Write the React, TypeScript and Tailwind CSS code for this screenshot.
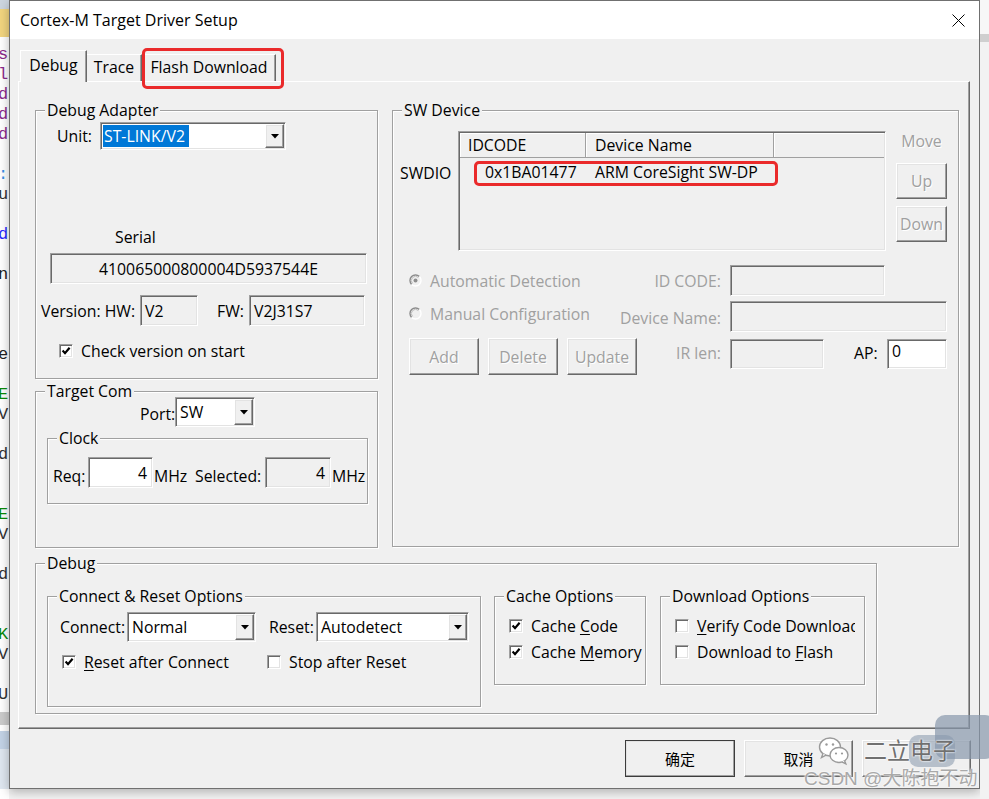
import React from "react";

type P = { className?: string; children?: React.ReactNode };

// Classic Win32 3D edges
const sunken =
  "border border-t-[#a0a0a0] border-l-[#a0a0a0] border-b-white border-r-white shadow-[inset_1px_1px_0_#696969,inset_-1px_-1px_0_#e3e3e3]";
const raised =
  "border border-t-white border-l-white border-b-[#696969] border-r-[#696969] shadow-[inset_-1px_-1px_0_#a0a0a0,inset_1px_1px_0_#e3e3e3]";
const etched = "border border-[#a0a0a0] shadow-[1px_1px_0_#ffffff,inset_1px_1px_0_#ffffff]";
const grey = "text-[#a0a0a0]";

function Group({ title, className = "", children }: P & { title: string }) {
  return (
    <div className={`relative shrink-0 ${etched} ${className}`}>
      <span className="absolute left-[9px] top-[-11px] bg-[#f0f0f0] px-[2px] leading-[20px] whitespace-nowrap">
        {title}
      </span>
      {children}
    </div>
  );
}

function Field({ className = "", children }: P) {
  return <div className={`flex shrink-0 items-center whitespace-nowrap ${sunken} ${className}`}>{children}</div>;
}

function Arrow() {
  return (
    <svg width="8" height="5" viewBox="0 0 8 5">
      <path d="M0 0h8L4 4.5z" fill="#000" />
    </svg>
  );
}

function Combo({ className = "", value, selected = false }: { className?: string; value: string; selected?: boolean }) {
  return (
    <div className={`flex shrink-0 bg-white p-[1px] ${sunken} ${className}`}>
      <div className="flex flex-1 items-center">
        {selected ? (
          <span className="ml-[1px] h-[22px] w-[86px] bg-[#0078d7] pl-[1px] leading-[22px] text-white">{value}</span>
        ) : (
          <span className="pl-[3px]">{value}</span>
        )}
      </div>
      <div className={`flex w-[19px] items-center justify-center bg-[#f0f0f0] ${raised}`}>
        <Arrow />
      </div>
    </div>
  );
}

function Btn({ className = "", children, disabled = false }: P & { disabled?: boolean }) {
  return (
    <div
      className={`flex shrink-0 items-center justify-center ${raised} ${
        disabled ? "text-[#a0a0a0] [text-shadow:1px_1px_0_#ffffff]" : ""
      } ${className}`}
    >
      {children}
    </div>
  );
}

function Check({ checked = false }: { checked?: boolean }) {
  return (
    <span className={`flex h-[14px] w-[14px] shrink-0 items-center justify-center bg-white ${sunken}`}>
      {checked && (
        <svg width="10" height="10" viewBox="0 0 10 10">
          <path d="M1.6 4.6l2.4 2.6L8.6 1.8" fill="none" stroke="#000" strokeWidth="2.2" />
        </svg>
      )}
    </span>
  );
}

function Radio({ on = false }: { on?: boolean }) {
  return (
    <svg width="13" height="13" viewBox="0 0 13 13" className="shrink-0">
      <circle cx="6.5" cy="6.5" r="5.5" fill="#f0f0f0" />
      <path d="M10.4 2.6A5.5 5.5 0 0 0 2.6 10.4" fill="none" stroke="#8a8a8a" strokeWidth="1.4" />
      <path d="M2.6 10.4A5.5 5.5 0 0 0 10.4 2.6" fill="none" stroke="#ffffff" strokeWidth="1.4" />
      <path d="M9.4 3.6A4.1 4.1 0 0 0 3.6 9.4" fill="none" stroke="#bdbdbd" strokeWidth="1" />
      {on && <circle cx="6.5" cy="6.5" r="2" fill="#8f8f8f" />}
    </svg>
  );
}

function Key({ children }: P) {
  return <span className="underline underline-offset-[2px]">{children}</span>;
}

const edgeLines: { ch: string; cls: string }[] = [
  { ch: "s", cls: "text-[#8b2b8b]" },
  { ch: "l", cls: "text-[#8b2b8b]" },
  { ch: "d", cls: "text-[#8b2b8b]" },
  { ch: "d", cls: "text-[#8b2b8b]" },
  { ch: "d", cls: "text-[#8b2b8b]" },
  { ch: "", cls: "" },
  { ch: ":", cls: "text-[#3a8ee6]" },
  { ch: "u", cls: "text-[#333333]" },
  { ch: "", cls: "" },
  { ch: "d", cls: "text-[#2a2aff]" },
  { ch: "", cls: "" },
  { ch: "n", cls: "text-[#222222]" },
  { ch: "", cls: "" },
  { ch: "", cls: "" },
  { ch: "", cls: "" },
  { ch: "e", cls: "text-[#222222]" },
  { ch: "", cls: "" },
  { ch: "E", cls: "text-[#0a8a0a]" },
  { ch: "V", cls: "text-[#333333]" },
  { ch: "", cls: "" },
  { ch: "d", cls: "text-[#333333]" },
  { ch: "", cls: "" },
  { ch: "", cls: "" },
  { ch: "E", cls: "text-[#0a8a0a]" },
  { ch: "V", cls: "text-[#333333]" },
  { ch: "", cls: "" },
  { ch: "d", cls: "text-[#333333]" },
  { ch: "", cls: "" },
  { ch: "", cls: "" },
  { ch: "K", cls: "text-[#0a8a0a]" },
  { ch: "V", cls: "text-[#333333]" },
  { ch: "", cls: "" },
  { ch: "U", cls: "text-[#333333]" },
];

// Sliver of the code editor visible behind the dialog
function EditorEdge() {
  return (
    <div className="flex h-[799px] w-[9px] shrink-0 flex-col overflow-hidden bg-white font-['Liberation_Mono',monospace] text-[17px] leading-[20px]">
      <div className="h-[9px] shrink-0 bg-[#cdd6df]" />
      <div className="h-[28px] shrink-0 bg-[#f2d57f]" />
      <div className="h-[8px] shrink-0" />
      {edgeLines.map((l, i) => (
        <div key={i} className={`-ml-[2px] h-[20px] shrink-0 ${l.cls}`}>
          {l.ch}
        </div>
      ))}
      <div className="h-[7px] shrink-0" />
      <div className="h-[13px] shrink-0 bg-[#cbcbcb]" />
      <div className="h-[6px] shrink-0" />
      <div className="h-[18px] shrink-0 bg-[#c3d3e6]" />
      <div className="h-[40px] shrink-0 bg-[#dfe7f0]" />
    </div>
  );
}

function RightEdge() {
  return (
    <div className="flex h-[799px] w-[9px] shrink-0 flex-col bg-[#f2f2f2]">
      <div className="h-[34px] shrink-0 bg-[#f7f7f7]" />
      <div className="h-[8px] shrink-0 bg-[#cfcfcf]" />
    </div>
  );
}

function Tabs() {
  return (
    <div className="relative flex h-[31px] items-end pl-[2px]">
      <div className="relative z-10 -mb-[1px] flex h-[32px] w-[67px] items-center justify-center border-l border-r border-t border-white border-r-[#696969] bg-[#f0f0f0] pb-[3px] shadow-[inset_-1px_0_0_#a0a0a0]">
        Debug
      </div>
      <div className="flex h-[27px] w-[55px] items-center justify-center border-r border-t border-white border-r-[#696969] pb-[2px] shadow-[inset_-1px_0_0_#a0a0a0]">
        Trace
      </div>
      <div className="flex h-[27px] w-[134px] items-center justify-center border-l border-r border-t border-white border-r-[#696969] pb-[2px] shadow-[inset_-1px_0_0_#a0a0a0]">
        Flash Download
      </div>
      <div className="pointer-events-none absolute left-[124px] top-[-2px] h-[41px] w-[142px] rounded-[5px] border-[3px] border-[#ea2a2b]" />
    </div>
  );
}

function DebugAdapter() {
  return (
    <Group title="Debug Adapter" className="h-[269px] w-[343px]">
      <div className="mt-[11px] flex items-center">
        <span className="ml-[21px] w-[43px]">Unit:</span>
        <Combo className="h-[28px] w-[186px]" value="ST-LINK/V2" selected />
      </div>
      <div className="ml-[79px] mt-[77px]">Serial</div>
      <Field className="ml-[14px] mt-[6px] h-[31px] w-[317px] justify-center">410065000800004D5937544E</Field>
      <div className="ml-[5px] mt-[11px] flex items-center">
        <span className="w-[99px]">Version: HW:</span>
        <Field className="h-[31px] w-[58px] pl-[4px]">V2</Field>
        <span className="ml-[19px] w-[32px]">FW:</span>
        <Field className="h-[31px] w-[116px] pl-[4px]">V2J31S7</Field>
      </div>
      <div className="ml-[23px] mt-[15px] flex items-center">
        <Check checked />
        <span className="ml-[8px]">Check version on start</span>
      </div>
    </Group>
  );
}

function TargetCom() {
  return (
    <Group title="Target Com" className="mt-[12px] h-[157px] w-[343px]">
      <div className="ml-[104px] mt-[5px] flex items-center">
        <span className="mt-[4px] w-[35px]">Port:</span>
        <Combo className="h-[30px] w-[80px]" value="SW" />
      </div>
      <Group title="Clock" className="ml-[11px] mt-[11px] h-[66px] w-[321px]">
        <div className="ml-[5px] mt-[18px] flex items-center">
          <span className="mt-[6px] w-[35px]">Req:</span>
          <Field className="h-[31px] w-[65px] justify-end bg-white pr-[5px]">4</Field>
          <span className="mt-[6px] w-[42px] pl-[1px]">MHz</span>
          <span className="mt-[6px] w-[70px]">Selected:</span>
          <Field className="h-[31px] w-[66px] justify-end pr-[5px]">4</Field>
          <span className="mt-[6px] pl-[1px]">MHz</span>
        </div>
      </Group>
    </Group>
  );
}

function SwDevice() {
  return (
    <Group title="SW Device" className="h-[437px] w-[567px]">
      <div className="mt-[20px] flex">
        <div className="w-[65px] shrink-0 pl-[7px] pt-[32px]">SWDIO</div>
        <div className={`relative h-[120px] w-[428px] shrink-0 p-[1px] ${sunken}`}>
          <div className="flex h-[25px]">
            <div className="flex w-[126px] items-center border-b border-r border-b-[#a0a0a0] border-r-[#a0a0a0] pl-[8px] shadow-[inset_1px_1px_0_#ffffff]">
              IDCODE
            </div>
            <div className="flex w-[188px] items-center border-b border-r border-b-[#a0a0a0] border-r-[#a0a0a0] pl-[9px] shadow-[inset_1px_1px_0_#ffffff]">
              Device Name
            </div>
            <div className="flex-1 border-b border-b-[#a0a0a0] shadow-[inset_1px_1px_0_#ffffff]" />
          </div>
          <div className="flex pt-[4px]">
            <span className="w-[126px] pl-[25px]">0x1BA01477</span>
            <span className="pl-[9px]">ARM CoreSight SW-DP</span>
          </div>
          <div className="pointer-events-none absolute left-[15px] top-[29px] h-[25px] w-[304px] rounded-[5px] border-[3px] border-[#ea2a2b]" />
        </div>
        <div className="ml-[10px] flex w-[51px] shrink-0 flex-col items-center">
          <span className={`${grey} [text-shadow:1px_1px_0_#ffffff]`}>Move</span>
          <Btn disabled className="mt-[12px] h-[36px] w-[51px]">
            Up
          </Btn>
          <Btn disabled className="mt-[7px] h-[36px] w-[51px]">
            Down
          </Btn>
        </div>
      </div>

      <div className="mt-[14px] flex items-center">
        <div className="flex w-[328px] items-center justify-between">
          <div className={`ml-[16px] flex items-center gap-[8px] ${grey}`}>
            <Radio on />
            <span>Automatic Detection</span>
          </div>
          <span className={grey}>ID CODE:</span>
        </div>
        <Field className="ml-[9px] h-[31px] w-[155px]" />
      </div>

      <div className="mt-[5px] flex items-center">
        <div className="flex w-[328px] items-center justify-between">
          <div className={`-mt-[6px] ml-[16px] flex items-center gap-[8px] ${grey}`}>
            <Radio />
            <span>Manual Configuration</span>
          </div>
          <span className={`mt-[2px] ${grey}`}>Device Name:</span>
        </div>
        <Field className="ml-[9px] h-[31px] w-[217px]" />
      </div>

      <div className="mt-[6px] flex items-start">
        <Btn disabled className="ml-[16px] h-[37px] w-[70px]">
          Add
        </Btn>
        <Btn disabled className="ml-[9px] h-[37px] w-[70px]">
          Delete
        </Btn>
        <Btn disabled className="ml-[9px] h-[37px] w-[70px]">
          Update
        </Btn>
        <span className={`mt-[5px] w-[84px] text-right ${grey}`}>IR len:</span>
        <Field className="ml-[9px] mt-[1px] h-[30px] w-[94px]" />
        <span className="ml-[30px] mt-[5px] w-[33px]">AP:</span>
        <Field className="mt-[1px] h-[30px] w-[60px] items-start bg-white pl-[4px] pt-[1px]">0</Field>
      </div>
    </Group>
  );
}

function DebugGroup() {
  return (
    <Group title="Debug" className="mt-[15px] h-[151px] w-[842px]">
      <div className="ml-[11px] mt-[32px] flex items-start">
        <Group title="Connect & Reset Options" className="h-[111px] w-[434px]">
          <div className="ml-[12px] mt-[15px] flex items-center">
            <span className="w-[67px]">Connect:</span>
            <Combo className="h-[30px] w-[129px]" value="Normal" />
            <span className="ml-[13px] w-[47px]">Reset:</span>
            <Combo className="h-[30px] w-[153px]" value="Autodetect" />
          </div>
          <div className="ml-[14px] mt-[10px] flex items-center">
            <div className="flex w-[205px] items-center">
              <Check checked />
              <span className="ml-[8px]">
                <Key>R</Key>eset after Connect
              </span>
            </div>
            <Check />
            <span className="ml-[8px]">Stop after Reset</span>
          </div>
        </Group>
        <Group title="Cache Options" className="ml-[13px] h-[89px] w-[152px]">
          <div className="ml-[14px] mt-[19px] flex items-center whitespace-nowrap">
            <Check checked />
            <span className="ml-[8px]">
              Cache <Key>C</Key>ode
            </span>
          </div>
          <div className="ml-[14px] mt-[6px] flex items-center whitespace-nowrap">
            <Check checked />
            <span className="ml-[8px]">
              Cache <Key>M</Key>emory
            </span>
          </div>
        </Group>
        <Group title="Download Options" className="ml-[14px] h-[89px] w-[205px]">
          <div className="ml-[14px] mt-[19px] flex w-[180px] items-center overflow-hidden whitespace-nowrap">
            <Check />
            <span className="ml-[8px]">
              <Key>V</Key>erify Code Download
            </span>
          </div>
          <div className="ml-[14px] mt-[6px] flex w-[180px] items-center overflow-hidden whitespace-nowrap">
            <Check />
            <span className="ml-[8px]">
              Download to <Key>F</Key>lash
            </span>
          </div>
        </Group>
      </div>
    </Group>
  );
}

function WeChatMark() {
  return (
    <svg width="32" height="30" viewBox="0 0 32 30">
      <ellipse cx="12" cy="11" rx="10.5" ry="9" fill="#ffffff" stroke="#9a9a9a" strokeWidth="1.4" />
      <path d="M5 17.5l-1.5 4 4.5-2.3" fill="#ffffff" stroke="#9a9a9a" strokeWidth="1.4" />
      <circle cx="8.5" cy="8.5" r="1.2" fill="#9a9a9a" />
      <circle cx="15" cy="8.5" r="1.2" fill="#9a9a9a" />
      <ellipse cx="21" cy="19" rx="9" ry="7.5" fill="#ffffff" stroke="#9a9a9a" strokeWidth="1.4" />
      <path d="M26.5 24.5l1.3 3.3-4-2" fill="#ffffff" stroke="#9a9a9a" strokeWidth="1.4" />
      <circle cx="18" cy="17.5" r="1.1" fill="#9a9a9a" />
      <circle cx="24" cy="17.5" r="1.1" fill="#9a9a9a" />
    </svg>
  );
}

export default function App() {
  return (
    <div className="relative flex h-[799px] w-[989px] overflow-hidden whitespace-nowrap bg-[#f4f4f4] font-['Open_Sans','Noto_Sans_CJK_SC',sans-serif] text-[15.8px] leading-[20px] text-black">
      <EditorEdge />

      <div className="flex h-[789px] w-[971px] shrink-0 flex-col border border-[#707070] bg-[#f0f0f0] shadow-[0_3px_10px_rgba(0,0,0,0.28)]">
        <div className="flex h-[38px] shrink-0 items-center justify-between bg-white pl-[10px] pr-[14px]">
          <span className="text-[16px]">Cortex-M Target Driver Setup</span>
          <svg width="13" height="13" viewBox="0 0 13 13">
            <path d="M0.5 0.5l12 12M12.5 0.5l-12 12" stroke="#000" strokeWidth="1" />
          </svg>
        </div>

        <div className="flex flex-1 flex-col pl-[8px] pt-[11px]">
          <Tabs />
          <div className="flex h-[648px] w-[952px] shrink-0 flex-col border border-b-[#696969] border-l-white border-r-[#696969] border-t-white pl-[16px] pt-[28px] shadow-[inset_-1px_-1px_0_#a0a0a0]">
            <div className="flex gap-[14px]">
              <div className="flex w-[343px] shrink-0 flex-col">
                <DebugAdapter />
                <TargetCom />
              </div>
              <SwDevice />
            </div>
            <DebugGroup />
          </div>

          <div className="mt-[11px] flex justify-end pr-[8px] font-['Noto_Sans_CJK_SC',sans-serif] text-[15px]">
            <Btn className="h-[37px] w-[110px] outline outline-1 outline-[#3c3c3c] -outline-offset-1">确定</Btn>
            <Btn className="ml-[9px] h-[37px] w-[109px]">取消</Btn>
            <Btn className="ml-[9px] h-[37px] w-[109px]" />
          </div>
        </div>
      </div>

      <RightEdge />

      {/* account watermark laid over the lower right corner */}
      <div className="pointer-events-none absolute left-[935px] top-[715px] h-[44px] w-[60px] rounded-[10px] bg-[#8797ab] opacity-70" />
      <div className="pointer-events-none absolute left-[909px] top-[735px] h-[32px] w-[46px] rounded-[9px] bg-[#8797ab] opacity-55" />
      <div className="pointer-events-none absolute left-[818px] top-[736px]">
        <WeChatMark />
      </div>
      <div className="pointer-events-none absolute left-[864px] top-[734px] font-['Noto_Sans_CJK_SC',sans-serif] text-[23px] leading-[30px] text-[#707070] [text-shadow:0_0_2px_#ffffff,0_0_2px_#ffffff]">
        二立电子
      </div>
      <div className="pointer-events-none absolute left-[804px] top-[767px] font-['Liberation_Sans','Noto_Sans_CJK_SC',sans-serif] text-[19px] leading-[24px] text-[#a9a9a9] [text-shadow:0_0_2px_#ffffff,0_0_2px_#ffffff]">
        CSDN @大陈抱不动
      </div>
    </div>
  );
}
